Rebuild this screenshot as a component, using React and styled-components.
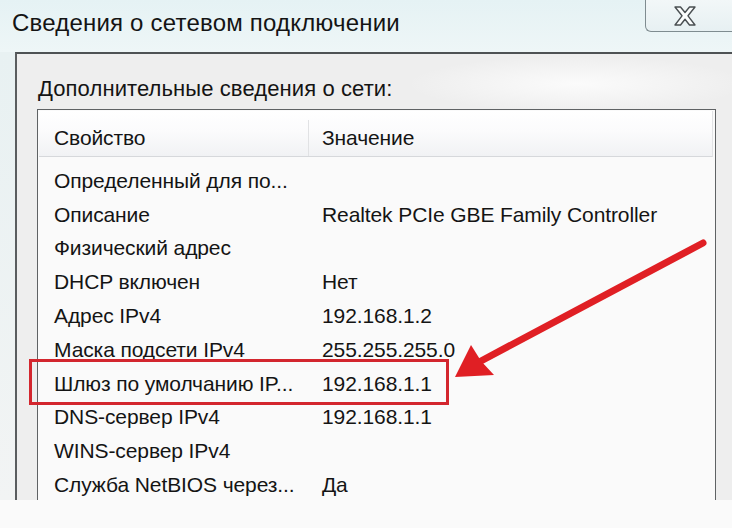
import styled, { createGlobalStyle } from "styled-components";

const GlobalStyle = createGlobalStyle`
  html, body {
    margin: 0;
    padding: 0;
    background: #fafafa;
  }
  * {
    box-sizing: border-box;
  }
`;

const Page = styled.div`
  position: relative;
  width: 732px;
  height: 528px;
  overflow: hidden;
  background: #fafafa;
  font-family: "Liberation Sans", Arial, sans-serif;
  color: #141414;
`;

const TitleBar = styled.div`
  height: 52px;
  display: flex;
  align-items: flex-start;
  background: linear-gradient(#e5f2f4, #eef6f7);
`;

const Title = styled.div`
  padding: 9px 0 0 12px;
  font-size: 24px;
  line-height: 28px;
  letter-spacing: 0.2px;
`;

const CloseButton = styled.div`
  margin-left: auto;
  width: 87px;
  height: 32px;
  border-left: 1px solid #7f8c90;
  border-bottom: 1px solid #7f8c90;
  border-bottom-left-radius: 6px;
  background: linear-gradient(#f2f7f8, #e7f0f2);
  display: flex;
  align-items: center;
  justify-content: center;
  padding-right: 8px;
`;

const Body = styled.div`
  display: flex;
  height: 448px;
`;

const Gutter = styled.div`
  width: 15px;
  background: linear-gradient(#e8f1f2, #f2f4f4);
`;

const Frame = styled.div`
  flex: 1;
  display: flex;
  flex-direction: column;
  overflow: hidden;
  border-top: 2px solid #4e5254;
  border-left: 2px solid #5a5d5f;
  background: radial-gradient(ellipse 170px 28px at 560px 30px, #fbfbfb, rgba(251, 251, 251, 0)),
    #eeeeee;
  padding: 22px 16px 0 20px;
`;

const GroupLabel = styled.div`
  font-size: 22px;
  line-height: 26px;
  padding-left: 1px;
  letter-spacing: 0.1px;
  margin-bottom: 7px;
`;

const ListView = styled.div`
  flex: 1;
  border: 1px solid #5f6264;
  border-bottom: none;
  background: #fafafa;
  padding: 1px 2px 0 1px;
`;

const Columns = styled.div`
  display: grid;
  grid-template-columns: 270px 1fr;
  align-items: center;
  height: ${(p) => p.height}px;
  font-size: 21px;
  letter-spacing: -0.1px;
  white-space: nowrap;
`;

const Header = styled(Columns)`
  background: linear-gradient(#ffffff 0%, #fbfbfc 45%, #f1f2f4 100%);
  border-bottom: 1px solid #d6d8db;
  border-right: 1px solid #e2e3e5;
  padding-top: 9px;
`;

const Cell = styled.div`
  padding-left: ${(p) => p.pad}px;
  height: 100%;
  display: flex;
  align-items: center;
  border-right: ${(p) => (p.divider ? "1px solid #e1e2e4" : "none")};
`;

const Rows = styled.div`
  padding-top: 7px;
`;

const Highlight = styled.div`
  position: absolute;
  left: 29px;
  top: 359px;
  width: 420px;
  height: 46px;
  border: 3px solid #d3262e;
`;

const Overlay = styled.svg`
  position: absolute;
  left: 0;
  top: 0;
  pointer-events: none;
`;

const rows = [
  ["Определенный для по...", ""],
  ["Описание", "Realtek PCIe GBE Family Controller"],
  ["Физический адрес", ""],
  ["DHCP включен", "Нет"],
  ["Адрес IPv4", "192.168.1.2"],
  ["Маска подсети IPv4", "255.255.255.0"],
  ["Шлюз по умолчанию IP...", "192.168.1.1"],
  ["DNS-сервер IPv4", "192.168.1.1"],
  ["WINS-сервер IPv4", ""],
  ["Служба NetBIOS через...", "Да"],
];

const CloseIcon = () => (
  <svg width="24" height="20" viewBox="0 0 24 20">
    <polygon
      points="2,1 7.5,1 12,6.5 16.5,1 22,1 15,9.8 22,19 16.5,19 12,13.2 7.5,19 2,19 9,9.8"
      fill="#fbfdfd"
      stroke="#4a4f52"
      strokeWidth="1.4"
      strokeLinejoin="round"
    />
  </svg>
);

export default function App() {
  return (
    <Page>
      <GlobalStyle />
      <TitleBar>
        <Title>Сведения о сетевом подключении</Title>
        <CloseButton>
          <CloseIcon />
        </CloseButton>
      </TitleBar>
      <Body>
        <Gutter />
        <Frame>
          <GroupLabel>Дополнительные сведения о сети:</GroupLabel>
          <ListView>
            <Header height={46}>
              <Cell pad={15} divider>
                Свойство
              </Cell>
              <Cell pad={13}>Значение</Cell>
            </Header>
            <Rows>
              {rows.map(([name, value]) => (
                <Columns key={name} height={33.8}>
                  <Cell pad={15}>{name}</Cell>
                  <Cell pad={13}>{value}</Cell>
                </Columns>
              ))}
            </Rows>
          </ListView>
        </Frame>
      </Body>
      <Highlight />
      <Overlay width="732" height="528" viewBox="0 0 732 528">
        <line
          x1="703"
          y1="243"
          x2="481"
          y2="361"
          stroke="#e01f24"
          strokeWidth="7"
          strokeLinecap="round"
        />
        <polygon points="455,377 471,345 481,361 494,375" fill="#e01f24" />
      </Overlay>
    </Page>
  );
}
